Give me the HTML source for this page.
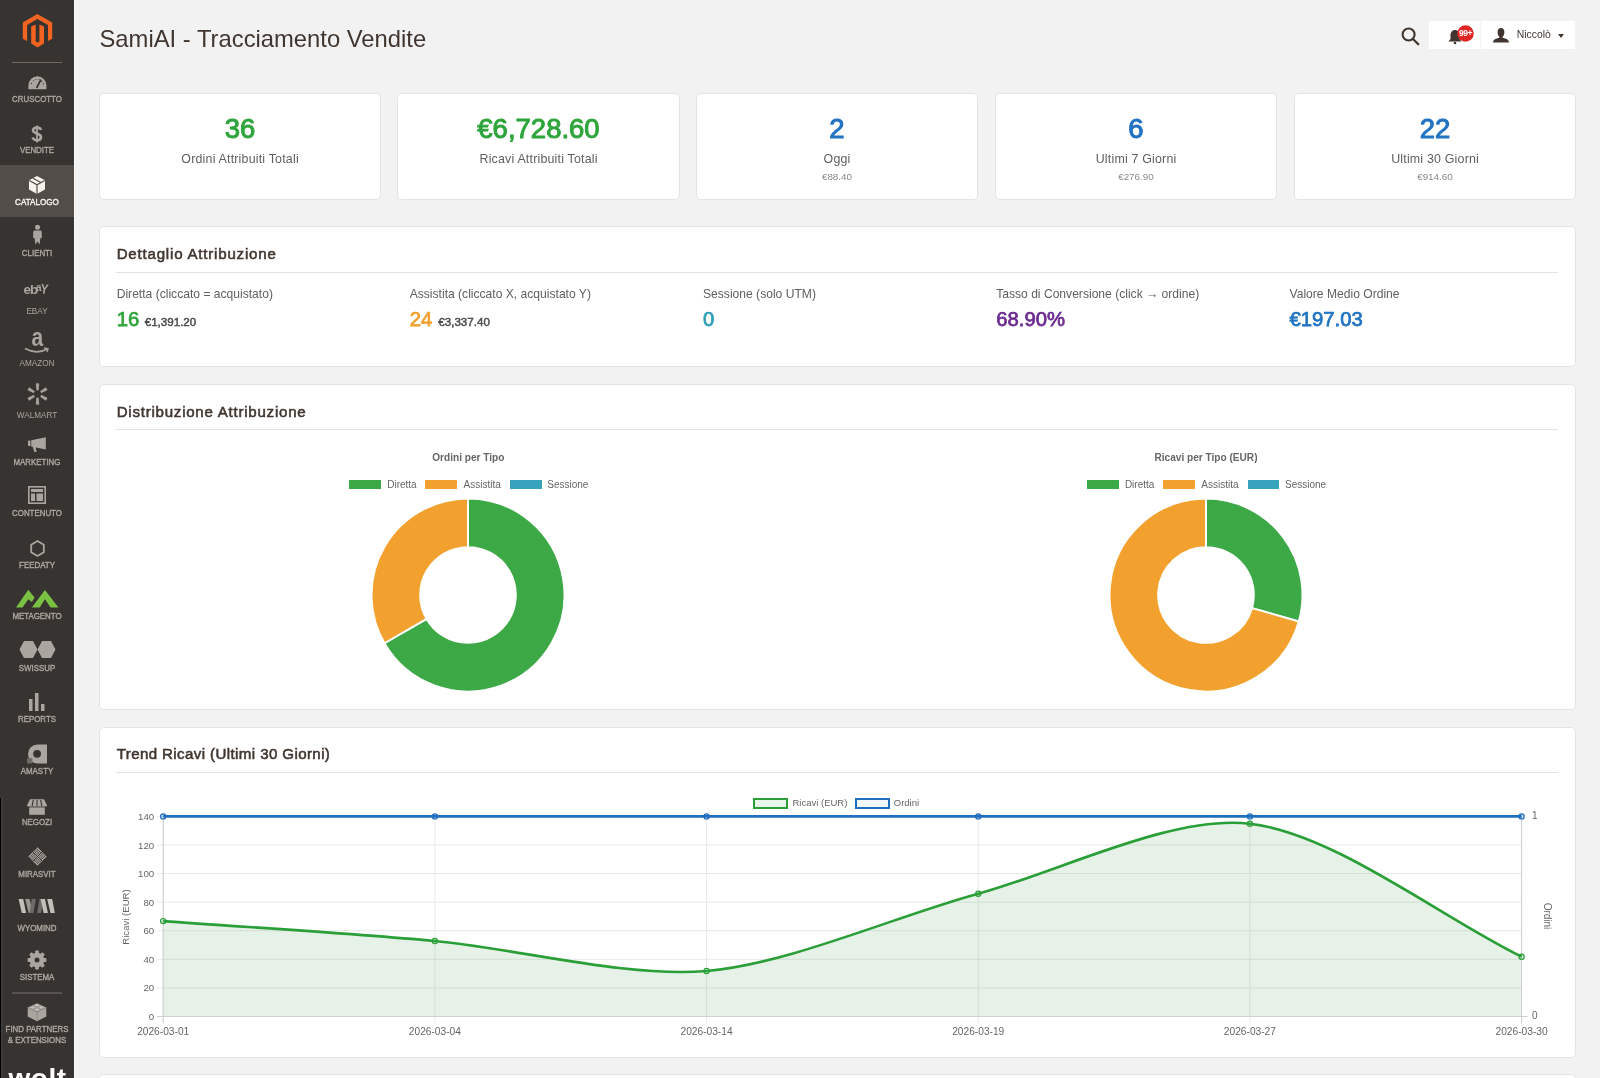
<!DOCTYPE html>
<html><head><meta charset="utf-8"><title>SamiAI - Tracciamento Vendite</title>
<style>
html,body{margin:0;padding:0;}
body{width:1600px;height:1078px;position:relative;overflow:hidden;background:#f2f2f2;font-family:"Liberation Sans", sans-serif;}
.t{position:absolute;line-height:1;white-space:nowrap;font-family:"Liberation Sans", sans-serif;}
svg{overflow:visible;}
</style></head><body><div id="root" style="position:absolute;left:0;top:0;width:1600px;height:1078px;will-change:transform;">
<div style="position:absolute;left:0px;top:0px;width:74px;height:1078px;background:#373330;"></div>
<div style="position:absolute;left:74px;top:0px;width:1px;height:1078px;background:#fbfbfb;"></div>
<div style="position:absolute;left:0px;top:165px;width:74px;height:52px;background:#524d49;"></div>
<div style="position:absolute;left:0px;top:797.5px;width:1px;height:280.5px;background:#000;"></div>
<div style="position:absolute;left:1px;top:797.5px;width:2px;height:280.5px;background:#3d3b39;"></div>
<svg style="position:absolute;left:22px;top:13px" width="31" height="36" viewBox="0 0 31 36">
<path fill="#f26322" d="M15.3 0.9 L30.2 9.5 V25.8 L26 28 V12 L15.3 5.9 L5.1 12 V28 L0.8 25.8 V9.5 Z"/>
<path fill="#f26322" d="M9.2 13.4 L13.7 11.6 V28.5 L15.5 29.6 L17.4 28.5 V11.6 L22 13.4 V30.6 L15.5 34.4 L9.2 30.6 Z"/>
</svg>
<div style="position:absolute;left:12px;top:62px;width:50px;height:1px;background:#736963;"></div>
<div class="t" style="left:0.00px;width:74px;text-align:center;top:95.65px;font-size:7.9px;color:#aba59e;font-weight:normal;transform:scaleY(1.17);transform-origin:50% 84.65%;-webkit-text-stroke:0.35px #aba59e;">CRUSCOTTO</div>
<div class="t" style="left:0.00px;width:74px;text-align:center;top:146.95px;font-size:7.9px;color:#aba59e;font-weight:normal;transform:scaleY(1.17);transform-origin:50% 84.65%;-webkit-text-stroke:0.35px #aba59e;">VENDITE</div>
<div class="t" style="left:0.00px;width:74px;text-align:center;top:198.95px;font-size:8.1px;color:#f7f3eb;font-weight:normal;transform:scaleY(1.17);transform-origin:50% 84.65%;-webkit-text-stroke:0.35px #f7f3eb;">CATALOGO</div>
<div class="t" style="left:0.00px;width:74px;text-align:center;top:250.35px;font-size:7.9px;color:#aba59e;font-weight:normal;transform:scaleY(1.17);transform-origin:50% 84.65%;-webkit-text-stroke:0.35px #aba59e;">CLIENTI</div>
<div class="t" style="left:0.00px;width:74px;text-align:center;top:307.80px;font-size:8.2px;color:#aba59e;font-weight:normal;transform:scaleY(1.17);transform-origin:50% 84.65%;">EBAY</div>
<div class="t" style="left:0.00px;width:74px;text-align:center;top:360.20px;font-size:8.2px;color:#aba59e;font-weight:normal;transform:scaleY(1.17);transform-origin:50% 84.65%;">AMAZON</div>
<div class="t" style="left:0.00px;width:74px;text-align:center;top:411.70px;font-size:8.2px;color:#aba59e;font-weight:normal;transform:scaleY(1.17);transform-origin:50% 84.65%;">WALMART</div>
<div class="t" style="left:0.00px;width:74px;text-align:center;top:458.55px;font-size:7.9px;color:#aba59e;font-weight:normal;transform:scaleY(1.17);transform-origin:50% 84.65%;-webkit-text-stroke:0.35px #aba59e;">MARKETING</div>
<div class="t" style="left:0.00px;width:74px;text-align:center;top:510.15px;font-size:7.9px;color:#aba59e;font-weight:normal;transform:scaleY(1.17);transform-origin:50% 84.65%;-webkit-text-stroke:0.35px #aba59e;">CONTENUTO</div>
<div class="t" style="left:0.00px;width:74px;text-align:center;top:561.75px;font-size:7.9px;color:#aba59e;font-weight:normal;transform:scaleY(1.17);transform-origin:50% 84.65%;-webkit-text-stroke:0.35px #aba59e;">FEEDATY</div>
<div class="t" style="left:0.00px;width:74px;text-align:center;top:613.15px;font-size:7.9px;color:#aba59e;font-weight:normal;transform:scaleY(1.17);transform-origin:50% 84.65%;-webkit-text-stroke:0.35px #aba59e;">METAGENTO</div>
<div class="t" style="left:0.00px;width:74px;text-align:center;top:664.55px;font-size:7.9px;color:#aba59e;font-weight:normal;transform:scaleY(1.17);transform-origin:50% 84.65%;-webkit-text-stroke:0.35px #aba59e;">SWISSUP</div>
<div class="t" style="left:0.00px;width:74px;text-align:center;top:716.35px;font-size:7.9px;color:#aba59e;font-weight:normal;transform:scaleY(1.17);transform-origin:50% 84.65%;-webkit-text-stroke:0.35px #aba59e;">REPORTS</div>
<div class="t" style="left:0.00px;width:74px;text-align:center;top:767.75px;font-size:7.9px;color:#aba59e;font-weight:normal;transform:scaleY(1.17);transform-origin:50% 84.65%;-webkit-text-stroke:0.35px #aba59e;">AMASTY</div>
<div class="t" style="left:0.00px;width:74px;text-align:center;top:818.85px;font-size:7.9px;color:#aba59e;font-weight:normal;transform:scaleY(1.17);transform-origin:50% 84.65%;-webkit-text-stroke:0.35px #aba59e;">NEGOZI</div>
<div class="t" style="left:0.00px;width:74px;text-align:center;top:870.95px;font-size:7.9px;color:#aba59e;font-weight:normal;transform:scaleY(1.17);transform-origin:50% 84.65%;-webkit-text-stroke:0.35px #aba59e;">MIRASVIT</div>
<div class="t" style="left:0.00px;width:74px;text-align:center;top:925.15px;font-size:7.9px;color:#aba59e;font-weight:normal;transform:scaleY(1.17);transform-origin:50% 84.65%;-webkit-text-stroke:0.35px #aba59e;">WYOMIND</div>
<div class="t" style="left:0.00px;width:74px;text-align:center;top:974.35px;font-size:7.9px;color:#aba59e;font-weight:normal;transform:scaleY(1.17);transform-origin:50% 84.65%;-webkit-text-stroke:0.35px #aba59e;">SISTEMA</div>
<div class="t" style="left:0.00px;width:74px;text-align:center;top:1025.95px;font-size:7.9px;color:#aba59e;font-weight:normal;transform:scaleY(1.17);transform-origin:50% 84.65%;-webkit-text-stroke:0.35px #aba59e;">FIND PARTNERS</div>
<div class="t" style="left:0.00px;width:74px;text-align:center;top:1036.65px;font-size:7.9px;color:#aba59e;font-weight:normal;transform:scaleY(1.17);transform-origin:50% 84.65%;-webkit-text-stroke:0.35px #aba59e;">&amp; EXTENSIONS</div>
<div style="position:absolute;left:12px;top:992px;width:50px;height:2px;background:#575250;"></div>
<svg style="position:absolute;left:27.5px;top:76px" width="19" height="14" viewBox="0 0 19 14"><path fill="#aaa59f" d="M0.4 9.3 A9 9 0 0 1 18.4 9.3 V13.3 H0.4 Z"/><path stroke="#373330" stroke-width="1.8" stroke-linecap="round" d="M8.9 11.3 L12.7 4.2"/><circle cx="3.48" cy="7.45" r="0.6" fill="#373330"/><circle cx="5.35" cy="4.77" r="0.6" fill="#373330"/><circle cx="7.77" cy="3.51" r="0.6" fill="#373330"/><circle cx="11.03" cy="3.51" r="0.6" fill="#373330"/><circle cx="13.85" cy="5.15" r="0.6" fill="#373330"/><circle cx="15.39" cy="7.65" r="0.6" fill="#373330"/></svg>
<svg style="position:absolute;left:30.5px;top:124.5px" width="12" height="18" viewBox="0 0 12 18"><path fill="none" stroke="#aaa59f" stroke-width="2.6" d="M10 5 C9.5 3.3 8 2.6 6 2.6 C3.5 2.6 2 3.8 2 5.5 C2 9 10 8 10 12 C10 14 8.3 15.2 6 15.2 C3.6 15.2 2.2 14.2 1.6 12.4"/><path stroke="#aaa59f" stroke-width="1.8" d="M6 0.5 V17.5"/></svg>
<svg style="position:absolute;left:29px;top:175.5px" width="16" height="18" viewBox="0 0 16 18"><path fill="#f7f3eb" d="M8 0 L16 4.3 V13.5 L8 18 L0 13.5 V4.3 Z"/><path stroke="#524d49" stroke-width="1.2" fill="none" d="M0.3 4.5 L8 8.8 L15.7 4.5 M8 8.8 V18 M4 2.2 L11.8 6.6"/></svg>
<svg style="position:absolute;left:32px;top:223.5px" width="11" height="21" viewBox="0 0 11 21"><circle cx="5.5" cy="3.2" r="2.5" fill="#aaa59f"/><path fill="#aaa59f" d="M2.2 6.6 H8.8 Q9.6 6.8 9.7 8 L9.9 13.8 L8.4 14.3 L7.6 20.5 L5.5 17.6 L3.4 20.5 L2.6 14.3 L1.1 13.8 L1.3 8 Q1.4 6.8 2.2 6.6 Z"/></svg>
<div class="t" style="left:23.60px;top:282.55px;font-size:13.5px;color:#aaa59f;font-weight:bold;">e</div>
<div class="t" style="left:30.00px;top:282.95px;font-size:13.5px;color:#aaa59f;font-weight:bold;">b</div>
<div class="t" style="left:35.80px;top:282.35px;font-size:10.5px;color:#aaa59f;font-weight:bold;">a</div>
<div class="t" style="left:40.20px;top:281.55px;font-size:13.5px;color:#aaa59f;font-weight:bold;transform:rotate(8deg) scaleX(0.85);transform-origin:0 80%;">Y</div>
<div class="t" style="left:17.30px;width:40px;text-align:center;top:327.80px;font-size:21px;color:#aaa59f;font-weight:bold;transform:scaleY(1.2);transform-origin:50% 84.65%;">a</div>
<svg style="position:absolute;left:24px;top:347px" width="26" height="8" viewBox="0 0 26 8"><path fill="none" stroke="#aaa59f" stroke-width="1.6" d="M1 1.5 Q13 8 23 2"/><path fill="none" stroke="#aaa59f" stroke-width="1.4" d="M20 1 L24 1.8 L23 5"/></svg>
<svg style="position:absolute;left:26.7px;top:383.2px" width="21" height="22" viewBox="0 0 21 22"><path fill="#aaa59f" stroke="#aaa59f" stroke-width="0.7" stroke-linejoin="round" d="M11.25 7.00 L11.80 0.70 L9.20 0.70 L9.75 7.00 Z"/><path fill="#aaa59f" stroke="#aaa59f" stroke-width="0.7" stroke-linejoin="round" d="M14.34 9.65 L20.07 6.98 L18.77 4.72 L13.59 8.35 Z"/><path fill="#aaa59f" stroke="#aaa59f" stroke-width="0.7" stroke-linejoin="round" d="M13.59 13.65 L18.77 17.28 L20.07 15.02 L14.34 12.35 Z"/><path fill="#aaa59f" stroke="#aaa59f" stroke-width="0.7" stroke-linejoin="round" d="M9.75 15.00 L9.20 21.30 L11.80 21.30 L11.25 15.00 Z"/><path fill="#aaa59f" stroke="#aaa59f" stroke-width="0.7" stroke-linejoin="round" d="M6.66 12.35 L0.93 15.02 L2.23 17.28 L7.41 13.65 Z"/><path fill="#aaa59f" stroke="#aaa59f" stroke-width="0.7" stroke-linejoin="round" d="M7.41 8.35 L2.23 4.72 L0.93 6.98 L6.66 9.65 Z"/></svg>
<svg style="position:absolute;left:28.2px;top:437.3px" width="18" height="16" viewBox="0 0 18 16"><rect x="0" y="3.6" width="2.4" height="5.4" fill="#aaa59f"/><path fill="#aaa59f" d="M3.2 3.2 L17.8 0.3 V12.5 L3.2 9.4 Z M4.6 9.6 L7.7 10.2 L8.6 15 L6.4 15 Z"/></svg>
<svg style="position:absolute;left:27.9px;top:486px" width="18" height="18" viewBox="0 0 18 18"><rect x="0.8" y="0.8" width="16.4" height="16.4" fill="none" stroke="#aaa59f" stroke-width="1.6"/><rect x="3" y="3" width="12" height="3" fill="#aaa59f"/><rect x="3" y="7.5" width="4" height="7.5" fill="#aaa59f"/><rect x="8.5" y="7.5" width="6.5" height="7.5" fill="#aaa59f"/></svg>
<svg style="position:absolute;left:30px;top:540px" width="15" height="17" viewBox="0 0 15 17"><path fill="none" stroke="#aaa59f" stroke-width="1.8" d="M7.5 1 L13.8 4.7 V12.3 L7.5 16 L1.2 12.3 V4.7 Z"/></svg>
<svg style="position:absolute;left:15px;top:580px" width="45" height="30" viewBox="0 0 45 30"><path fill="#7ac143" d="M1 27.6 L13.3 9.7 L19.6 17.6 L16.9 22 L13.3 19.2 L7.5 27.6 Z"/><path fill="#7ac143" d="M16.9 27.6 L29.9 10 L43.5 27.6 L35.7 27.6 L29.9 19.2 L24.7 27.6 Z"/></svg>
<svg style="position:absolute;left:18.5px;top:641px" width="38" height="17" viewBox="0 0 38 17"><path fill="#aaa59f" d="M5 0 H14 L18.5 8.5 L14 17 H5 L0.5 8.5 Z M23 0 H32 L36.5 8.5 L32 17 H23 L18.5 8.5 Z"/></svg>
<svg style="position:absolute;left:28.5px;top:693px" width="17" height="18" viewBox="0 0 17 18"><rect x="0" y="6" width="3.5" height="12" fill="#aaa59f"/><rect x="6" y="0" width="3.5" height="18" fill="#aaa59f"/><rect x="12" y="11" width="3.5" height="7" fill="#aaa59f"/></svg>
<svg style="position:absolute;left:27px;top:743.5px" width="21" height="20" viewBox="0 0 21 20"><path fill="#aaa59f" d="M10.5 0.5 H20 V19.5 H10.5 A9.5 9.5 0 0 1 10.5 0.5 Z"/><circle cx="10.1" cy="9.8" r="3.9" fill="#373330"/><rect x="0" y="14.2" width="5.3" height="5.3" fill="#6e6a66"/></svg>
<svg style="position:absolute;left:27px;top:798.5px" width="20" height="16" viewBox="0 0 20 16"><path fill="#aaa59f" d="M3 0.3 H17 L20 6.3 Q20 7.6 18.8 7.6 H1.2 Q0 7.6 0 6.3 Z"/><rect x="2.2" y="8.4" width="15.6" height="7.4" fill="#aaa59f"/><path stroke="#373330" stroke-width="1.1" d="M6.3 1 L5.2 6.8 M10 1 V6.8 M13.7 1 L14.8 6.8"/></svg>
<svg style="position:absolute;left:27.5px;top:847.3px" width="19" height="19" viewBox="0 0 19 19"><g transform="rotate(45 9.5 9.5)"><rect x="3" y="3" width="13" height="13" fill="#aaa59f"/><path stroke="#373330" stroke-width="0.75" d="M3 4.62 H9.5 M11.12 3 V9.5 M4.62 9.5 V16 M9.5 11.12 H16"/><path stroke="#373330" stroke-width="0.75" d="M3 6.25 H9.5 M12.75 3 V9.5 M6.25 9.5 V16 M9.5 12.75 H16"/><path stroke="#373330" stroke-width="0.75" d="M3 7.88 H9.5 M14.38 3 V9.5 M7.88 9.5 V16 M9.5 14.38 H16"/><path stroke="#373330" stroke-width="0.9" d="M9.5 3 V16 M3 9.5 H16"/></g></svg>
<svg style="position:absolute;left:14px;top:893px" width="46" height="26" viewBox="0 0 46 26"><path fill="#c2beb9" d="M4.60 6.00 L9.20 6.00 L12.10 20.10 L7.80 20.10 Z"/><path fill="#9b9793" d="M11.20 6.00 L15.50 6.00 L19.00 20.10 L14.70 20.10 Z"/><path fill="#6d6a67" d="M17.80 6.00 L21.90 6.00 L19.40 20.10 L15.40 20.10 Z"/><path fill="#6d6a67" d="M25.60 6.00 L30.00 6.00 L27.00 20.10 L23.10 20.10 Z"/><path fill="#c2beb9" d="M26.60 6.00 L31.00 6.00 L33.90 20.10 L29.60 20.10 Z"/><path fill="#c2beb9" d="M33.20 6.00 L38.20 6.00 L40.80 20.10 L36.50 20.10 Z"/></svg>
<svg style="position:absolute;left:27px;top:950.2px" width="20" height="20" viewBox="0 0 20 20"><circle cx="10" cy="10" r="7.3" fill="#aaa59f"/><rect x="8.1" y="0.6" width="3.8" height="5" rx="0.9" fill="#aaa59f" transform="rotate(0 10 10)"/><rect x="8.1" y="0.6" width="3.8" height="5" rx="0.9" fill="#aaa59f" transform="rotate(45 10 10)"/><rect x="8.1" y="0.6" width="3.8" height="5" rx="0.9" fill="#aaa59f" transform="rotate(90 10 10)"/><rect x="8.1" y="0.6" width="3.8" height="5" rx="0.9" fill="#aaa59f" transform="rotate(135 10 10)"/><rect x="8.1" y="0.6" width="3.8" height="5" rx="0.9" fill="#aaa59f" transform="rotate(180 10 10)"/><rect x="8.1" y="0.6" width="3.8" height="5" rx="0.9" fill="#aaa59f" transform="rotate(225 10 10)"/><rect x="8.1" y="0.6" width="3.8" height="5" rx="0.9" fill="#aaa59f" transform="rotate(270 10 10)"/><rect x="8.1" y="0.6" width="3.8" height="5" rx="0.9" fill="#aaa59f" transform="rotate(315 10 10)"/><circle cx="10" cy="10" r="2.5" fill="#373330"/></svg>
<svg style="position:absolute;left:27px;top:1002.3px" width="20" height="20" viewBox="0 0 20 20"><path fill="#aaa59f" d="M10 1.2 L19.3 5.6 V14.6 L10 19.2 L0.7 14.6 V5.6 Z"/><path stroke="#8a8682" stroke-width="0.8" fill="none" d="M0.7 5.6 L10 10.2 L19.3 5.6 M10 10.2 V19.2"/><ellipse cx="10" cy="4.1" rx="2.3" ry="1.2" fill="#7f7b77"/><ellipse cx="10" cy="3.6" rx="2.1" ry="1.05" fill="#c9c5c0"/><ellipse cx="5.6" cy="6.3" rx="2.3" ry="1.2" fill="#7f7b77"/><ellipse cx="5.6" cy="5.8" rx="2.1" ry="1.05" fill="#c9c5c0"/><ellipse cx="14.4" cy="6.3" rx="2.3" ry="1.2" fill="#7f7b77"/><ellipse cx="14.4" cy="5.8" rx="2.1" ry="1.05" fill="#c9c5c0"/><ellipse cx="10" cy="8.5" rx="2.3" ry="1.2" fill="#7f7b77"/><ellipse cx="10" cy="8" rx="2.1" ry="1.05" fill="#c9c5c0"/></svg>
<div class="t" style="left:0.50px;width:74px;text-align:center;top:1064.80px;font-size:28px;color:#ffffff;font-weight:bold;letter-spacing:0.5px;">wolt</div>
<div class="t" style="left:99.50px;top:27.40px;font-size:23.8px;color:#41362f;font-weight:normal;">SamiAI - Tracciamento Vendite</div>
<svg style="position:absolute;left:1400px;top:25.6px" width="21" height="21" viewBox="0 0 21 21"><circle cx="8.6" cy="8.5" r="6" fill="none" stroke="#41362f" stroke-width="2.1"/><path stroke="#41362f" stroke-width="2.3" stroke-linecap="round" d="M13 13 L18.3 18.3"/></svg>
<div style="position:absolute;left:1429px;top:21px;width:51px;height:28px;background:#fff;"></div>
<div style="position:absolute;left:1481px;top:21px;width:94px;height:28px;background:#fff;"></div>
<svg style="position:absolute;left:1447px;top:29px" width="16" height="16" viewBox="0 0 16 16"><path fill="#41362f" d="M8 1 C4.8 1 3.5 3.5 3.5 6.5 V10 L1.5 12.5 H14.5 L12.5 10 V6.5 C12.5 3.5 11.2 1 8 1 Z"/><circle cx="8" cy="14" r="1.3" fill="#41362f"/></svg>
<svg style="position:absolute;left:1457px;top:25px" width="17" height="17" viewBox="0 0 17 17"><circle cx="8.5" cy="8.5" r="8.3" fill="#e22626"/></svg>
<div class="t" style="left:1450.50px;width:30px;text-align:center;top:29.35px;font-size:8.5px;color:#fff;font-weight:bold;letter-spacing:-0.4px;">99+</div>
<svg style="position:absolute;left:1492.5px;top:27.5px" width="16" height="14.5" viewBox="0 0 16 14.5"><path fill="#41362f" d="M8 0 C5.5 0 4.6 2 4.6 4.2 C4.6 6.5 5.6 8.3 6.4 8.8 V9.8 C3 10.6 0.3 11.5 0 14.5 H16 C15.7 11.5 13 10.6 9.6 9.8 V8.8 C10.4 8.3 11.4 6.5 11.4 4.2 C11.4 2 10.5 0 8 0 Z"/></svg>
<div class="t" style="left:1516.80px;top:30.00px;font-size:10.4px;color:#41362f;font-weight:normal;">Niccol&ograve;</div>
<svg style="position:absolute;left:1557.5px;top:34px" width="6" height="4" viewBox="0 0 6 4"><path fill="#41362f" d="M0 0 H6 L3 4 Z"/></svg>
<div style="position:absolute;left:99px;top:93px;width:282px;height:107px;background:#fff;border:1px solid #e4e4e4;border-radius:5px;box-sizing:border-box;"></div>
<div class="t" style="left:100.00px;width:280px;text-align:center;top:114.55px;font-size:27.5px;color:#2fa53c;font-weight:normal;-webkit-text-stroke:1.0px #2fa53c;">36</div>
<div class="t" style="left:100.00px;width:280px;text-align:center;top:153.40px;font-size:12.4px;color:#5f5f5f;font-weight:normal;letter-spacing:0.2px;text-indent:0.2px;">Ordini Attribuiti Totali</div>
<div style="position:absolute;left:397px;top:93px;width:283px;height:107px;background:#fff;border:1px solid #e4e4e4;border-radius:5px;box-sizing:border-box;"></div>
<div class="t" style="left:398.50px;width:280px;text-align:center;top:114.55px;font-size:27.5px;color:#2fa53c;font-weight:normal;-webkit-text-stroke:1.0px #2fa53c;">&euro;6,728.60</div>
<div class="t" style="left:398.50px;width:280px;text-align:center;top:153.40px;font-size:12.4px;color:#5f5f5f;font-weight:normal;letter-spacing:0.2px;text-indent:0.2px;">Ricavi Attribuiti Totali</div>
<div style="position:absolute;left:696px;top:93px;width:282px;height:107px;background:#fff;border:1px solid #e4e4e4;border-radius:5px;box-sizing:border-box;"></div>
<div class="t" style="left:697.00px;width:280px;text-align:center;top:114.55px;font-size:27.5px;color:#2273c3;font-weight:normal;-webkit-text-stroke:1.0px #2273c3;">2</div>
<div class="t" style="left:697.00px;width:280px;text-align:center;top:153.40px;font-size:12.4px;color:#5f5f5f;font-weight:normal;letter-spacing:0.2px;text-indent:0.2px;">Oggi</div>
<div class="t" style="left:697.00px;width:280px;text-align:center;top:171.85px;font-size:9.9px;color:#8a8a8a;font-weight:normal;">&euro;88.40</div>
<div style="position:absolute;left:995px;top:93px;width:282px;height:107px;background:#fff;border:1px solid #e4e4e4;border-radius:5px;box-sizing:border-box;"></div>
<div class="t" style="left:996.00px;width:280px;text-align:center;top:114.55px;font-size:27.5px;color:#2273c3;font-weight:normal;-webkit-text-stroke:1.0px #2273c3;">6</div>
<div class="t" style="left:996.00px;width:280px;text-align:center;top:153.40px;font-size:12.4px;color:#5f5f5f;font-weight:normal;letter-spacing:0.2px;text-indent:0.2px;">Ultimi 7 Giorni</div>
<div class="t" style="left:996.00px;width:280px;text-align:center;top:171.85px;font-size:9.9px;color:#8a8a8a;font-weight:normal;">&euro;276.90</div>
<div style="position:absolute;left:1294px;top:93px;width:282px;height:107px;background:#fff;border:1px solid #e4e4e4;border-radius:5px;box-sizing:border-box;"></div>
<div class="t" style="left:1295.00px;width:280px;text-align:center;top:114.55px;font-size:27.5px;color:#2273c3;font-weight:normal;-webkit-text-stroke:1.0px #2273c3;">22</div>
<div class="t" style="left:1295.00px;width:280px;text-align:center;top:153.40px;font-size:12.4px;color:#5f5f5f;font-weight:normal;letter-spacing:0.2px;text-indent:0.2px;">Ultimi 30 Giorni</div>
<div class="t" style="left:1295.00px;width:280px;text-align:center;top:171.85px;font-size:9.9px;color:#8a8a8a;font-weight:normal;">&euro;914.60</div>
<div style="position:absolute;left:99px;top:226px;width:1477px;height:140.5px;background:#fff;border:1px solid #e4e4e4;border-radius:5px;box-sizing:border-box;"></div>
<div class="t" style="left:116.70px;top:245.55px;font-size:15.1px;color:#41362f;font-weight:normal;-webkit-text-stroke:0.55px #41362f;letter-spacing:0.786px;">Dettaglio Attribuzione</div>
<div style="position:absolute;left:116px;top:272px;width:1442px;height:1px;background:#e3e3e3;"></div>
<div class="t" style="left:116.70px;top:287.85px;font-size:12.1px;color:#5f5f5f;font-weight:normal;">Diretta (cliccato = acquistato)</div>
<div class="t" style="left:116.70px;top:308.85px;font-size:20.3px;color:#2fa53c;font-weight:normal;-webkit-text-stroke:0.75px #2fa53c;">16</div>
<div class="t" style="left:144.70px;top:316.20px;font-size:11.6px;color:#4a4a4a;font-weight:normal;-webkit-text-stroke:0.45px #4a4a4a;">&euro;1,391.20</div>
<div class="t" style="left:409.70px;top:287.85px;font-size:12.1px;color:#5f5f5f;font-weight:normal;">Assistita (cliccato X, acquistato Y)</div>
<div class="t" style="left:409.70px;top:308.85px;font-size:20.3px;color:#f0a02e;font-weight:normal;-webkit-text-stroke:0.75px #f0a02e;">24</div>
<div class="t" style="left:438.30px;top:316.20px;font-size:11.6px;color:#4a4a4a;font-weight:normal;-webkit-text-stroke:0.45px #4a4a4a;">&euro;3,337.40</div>
<div class="t" style="left:703.00px;top:287.85px;font-size:12.1px;color:#5f5f5f;font-weight:normal;">Sessione (solo UTM)</div>
<div class="t" style="left:703.00px;top:308.85px;font-size:20.3px;color:#30a0b8;font-weight:normal;-webkit-text-stroke:0.75px #30a0b8;">0</div>
<div class="t" style="left:996.20px;top:287.85px;font-size:12.1px;color:#5f5f5f;font-weight:normal;">Tasso di Conversione (click &rarr; ordine)</div>
<div class="t" style="left:996.20px;top:308.85px;font-size:20.3px;color:#6c2d91;font-weight:normal;-webkit-text-stroke:0.75px #6c2d91;">68.90%</div>
<div class="t" style="left:1289.50px;top:287.85px;font-size:12.1px;color:#5f5f5f;font-weight:normal;">Valore Medio Ordine</div>
<div class="t" style="left:1289.50px;top:308.85px;font-size:20.3px;color:#2273c3;font-weight:normal;-webkit-text-stroke:0.75px #2273c3;">&euro;197.03</div>
<div style="position:absolute;left:99px;top:383.5px;width:1477px;height:326.0px;background:#fff;border:1px solid #e4e4e4;border-radius:5px;box-sizing:border-box;"></div>
<div class="t" style="left:116.70px;top:403.65px;font-size:15.1px;color:#41362f;font-weight:normal;-webkit-text-stroke:0.55px #41362f;letter-spacing:0.748px;">Distribuzione Attribuzione</div>
<div style="position:absolute;left:116px;top:429px;width:1442px;height:1px;background:#e3e3e3;"></div>
<div class="t" style="left:318.30px;width:300px;text-align:center;top:452.65px;font-size:10.1px;color:#666666;font-weight:bold;">Ordini per Tipo</div>
<div style="position:absolute;left:349.4px;top:480.4px;width:31.600000000000023px;height:8.200000000000045px;background:#3ca846;"></div>
<div class="t" style="left:387.20px;top:479.80px;font-size:10.0px;color:#666666;font-weight:normal;">Diretta</div>
<div style="position:absolute;left:425.4px;top:480.4px;width:31.600000000000023px;height:8.200000000000045px;background:#f2a12f;"></div>
<div class="t" style="left:463.60px;top:479.80px;font-size:10.0px;color:#666666;font-weight:normal;">Assistita</div>
<div style="position:absolute;left:510.0px;top:480.4px;width:31.600000000000023px;height:8.200000000000045px;background:#38a3bd;"></div>
<div class="t" style="left:547.30px;top:479.80px;font-size:10.0px;color:#666666;font-weight:normal;">Sessione</div>
<svg style="position:absolute;left:368.3px;top:494.7px" width="200" height="200" viewBox="0 0 200 200"><path fill="#3ca846" stroke="#fff" stroke-width="2" stroke-linejoin="bevel" d="M100.00 3.50 A96.5 96.5 0 1 1 16.43 148.25 L58.60 123.90 A47.8 47.8 0 1 0 100.00 52.20 Z"/><path fill="#f2a12f" stroke="#fff" stroke-width="2" stroke-linejoin="bevel" d="M16.43 148.25 A96.5 96.5 0 0 1 100.00 3.50 L100.00 52.20 A47.8 47.8 0 0 0 58.60 123.90 Z"/></svg>
<div class="t" style="left:1056.00px;width:300px;text-align:center;top:452.65px;font-size:10.1px;color:#666666;font-weight:bold;">Ricavi per Tipo (EUR)</div>
<div style="position:absolute;left:1087.1px;top:480.4px;width:31.600000000000136px;height:8.200000000000045px;background:#3ca846;"></div>
<div class="t" style="left:1124.90px;top:479.80px;font-size:10.0px;color:#666666;font-weight:normal;">Diretta</div>
<div style="position:absolute;left:1163.1px;top:480.4px;width:31.600000000000136px;height:8.200000000000045px;background:#f2a12f;"></div>
<div class="t" style="left:1201.30px;top:479.80px;font-size:10.0px;color:#666666;font-weight:normal;">Assistita</div>
<div style="position:absolute;left:1247.7px;top:480.4px;width:31.59999999999991px;height:8.200000000000045px;background:#38a3bd;"></div>
<div class="t" style="left:1285.00px;top:479.80px;font-size:10.0px;color:#666666;font-weight:normal;">Sessione</div>
<svg style="position:absolute;left:1106px;top:494.7px" width="200" height="200" viewBox="0 0 200 200"><path fill="#3ca846" stroke="#fff" stroke-width="2" stroke-linejoin="bevel" d="M100.00 3.50 A96.5 96.5 0 0 1 192.80 126.46 L145.97 113.11 A47.8 47.8 0 0 0 100.00 52.20 Z"/><path fill="#f2a12f" stroke="#fff" stroke-width="2" stroke-linejoin="bevel" d="M192.80 126.46 A96.5 96.5 0 1 1 100.00 3.50 L100.00 52.20 A47.8 47.8 0 1 0 145.97 113.11 Z"/></svg>
<div style="position:absolute;left:99px;top:726.5px;width:1477px;height:331.5px;background:#fff;border:1px solid #e4e4e4;border-radius:5px;box-sizing:border-box;"></div>
<div class="t" style="left:116.70px;top:745.75px;font-size:15.1px;color:#41362f;font-weight:normal;-webkit-text-stroke:0.55px #41362f;letter-spacing:0.388px;">Trend Ricavi (Ultimi 30 Giorni)</div>
<div style="position:absolute;left:116px;top:772px;width:1442px;height:1px;background:#e3e3e3;"></div>
<svg style="position:absolute;left:0;top:0" width="1600" height="1078"><path stroke="#e8e8e8" stroke-width="1" d="M157.2 1016.50 H1521.6"/><path stroke="#e8e8e8" stroke-width="1" d="M157.2 987.91 H1521.6"/><path stroke="#e8e8e8" stroke-width="1" d="M157.2 959.33 H1521.6"/><path stroke="#e8e8e8" stroke-width="1" d="M157.2 930.74 H1521.6"/><path stroke="#e8e8e8" stroke-width="1" d="M157.2 902.16 H1521.6"/><path stroke="#e8e8e8" stroke-width="1" d="M157.2 873.57 H1521.6"/><path stroke="#e8e8e8" stroke-width="1" d="M157.2 844.99 H1521.6"/><path stroke="#e8e8e8" stroke-width="1" d="M157.2 816.40 H1521.6"/><path stroke="#e8e8e8" stroke-width="1" d="M163.20 816.40 V1023.5"/><path stroke="#e8e8e8" stroke-width="1" d="M434.88 816.40 V1023.5"/><path stroke="#e8e8e8" stroke-width="1" d="M706.56 816.40 V1023.5"/><path stroke="#e8e8e8" stroke-width="1" d="M978.24 816.40 V1023.5"/><path stroke="#e8e8e8" stroke-width="1" d="M1249.92 816.40 V1023.5"/><path stroke="#e8e8e8" stroke-width="1" d="M1521.60 816.40 V1023.5"/><path fill="rgba(60,150,80,0.13)" d="M163.20 921.10 C244.70 927.07 353.51 933.53 434.88 941.00 C516.52 948.50 626.40 977.98 706.56 971.00 C789.40 963.79 896.46 915.87 978.24 893.70 C1059.47 871.68 1171.48 814.61 1249.92 823.70 C1334.49 833.51 1440.10 916.80 1521.60 956.70 L1521.60 1016.5 L163.20 1016.5 Z"/><path stroke="#cfcfcf" stroke-width="1" d="M163.20 816.40 V1023.5 M157.2 1016.50 H1527.6 M1521.60 816.40 V1023.5"/><path fill="none" stroke="#2a9f38" stroke-width="2.6" d="M163.20 921.10 C244.70 927.07 353.51 933.53 434.88 941.00 C516.52 948.50 626.40 977.98 706.56 971.00 C789.40 963.79 896.46 915.87 978.24 893.70 C1059.47 871.68 1171.48 814.61 1249.92 823.70 C1334.49 833.51 1440.10 916.80 1521.60 956.70"/><path fill="none" stroke="#1f6fbf" stroke-width="2.6" d="M163.20 816.40 H1521.60"/><circle cx="163.20" cy="921.10" r="2.6" fill="rgba(40,167,69,0.15)" stroke="#2a9f38" stroke-width="1.2"/><circle cx="434.88" cy="941.00" r="2.6" fill="rgba(40,167,69,0.15)" stroke="#2a9f38" stroke-width="1.2"/><circle cx="706.56" cy="971.00" r="2.6" fill="rgba(40,167,69,0.15)" stroke="#2a9f38" stroke-width="1.2"/><circle cx="978.24" cy="893.70" r="2.6" fill="rgba(40,167,69,0.15)" stroke="#2a9f38" stroke-width="1.2"/><circle cx="1249.92" cy="823.70" r="2.6" fill="rgba(40,167,69,0.15)" stroke="#2a9f38" stroke-width="1.2"/><circle cx="1521.60" cy="956.70" r="2.6" fill="rgba(40,167,69,0.15)" stroke="#2a9f38" stroke-width="1.2"/><circle cx="163.20" cy="816.40" r="2.6" fill="rgba(31,111,191,0.2)" stroke="#1f6fbf" stroke-width="1.2"/><circle cx="434.88" cy="816.40" r="2.6" fill="rgba(31,111,191,0.2)" stroke="#1f6fbf" stroke-width="1.2"/><circle cx="706.56" cy="816.40" r="2.6" fill="rgba(31,111,191,0.2)" stroke="#1f6fbf" stroke-width="1.2"/><circle cx="978.24" cy="816.40" r="2.6" fill="rgba(31,111,191,0.2)" stroke="#1f6fbf" stroke-width="1.2"/><circle cx="1249.92" cy="816.40" r="2.6" fill="rgba(31,111,191,0.2)" stroke="#1f6fbf" stroke-width="1.2"/><circle cx="1521.60" cy="816.40" r="2.6" fill="rgba(31,111,191,0.2)" stroke="#1f6fbf" stroke-width="1.2"/></svg>
<div class="t" style="left:114.20px;width:40px;text-align:right;top:1012.05px;font-size:9.7px;color:#666666;font-weight:normal;">0</div>
<div class="t" style="left:114.20px;width:40px;text-align:right;top:983.46px;font-size:9.7px;color:#666666;font-weight:normal;">20</div>
<div class="t" style="left:114.20px;width:40px;text-align:right;top:954.88px;font-size:9.7px;color:#666666;font-weight:normal;">40</div>
<div class="t" style="left:114.20px;width:40px;text-align:right;top:926.29px;font-size:9.7px;color:#666666;font-weight:normal;">60</div>
<div class="t" style="left:114.20px;width:40px;text-align:right;top:897.71px;font-size:9.7px;color:#666666;font-weight:normal;">80</div>
<div class="t" style="left:114.20px;width:40px;text-align:right;top:869.12px;font-size:9.7px;color:#666666;font-weight:normal;">100</div>
<div class="t" style="left:114.20px;width:40px;text-align:right;top:840.54px;font-size:9.7px;color:#666666;font-weight:normal;">120</div>
<div class="t" style="left:114.20px;width:40px;text-align:right;top:811.95px;font-size:9.7px;color:#666666;font-weight:normal;">140</div>
<div class="t" style="left:123.20px;width:80px;text-align:center;top:1026.60px;font-size:10.2px;color:#666666;font-weight:normal;">2026-03-01</div>
<div class="t" style="left:394.88px;width:80px;text-align:center;top:1026.60px;font-size:10.2px;color:#666666;font-weight:normal;">2026-03-04</div>
<div class="t" style="left:666.56px;width:80px;text-align:center;top:1026.60px;font-size:10.2px;color:#666666;font-weight:normal;">2026-03-14</div>
<div class="t" style="left:938.24px;width:80px;text-align:center;top:1026.60px;font-size:10.2px;color:#666666;font-weight:normal;">2026-03-19</div>
<div class="t" style="left:1209.92px;width:80px;text-align:center;top:1026.60px;font-size:10.2px;color:#666666;font-weight:normal;">2026-03-27</div>
<div class="t" style="left:1481.60px;width:80px;text-align:center;top:1026.60px;font-size:10.2px;color:#666666;font-weight:normal;">2026-03-30</div>
<div class="t" style="left:1532.10px;top:811.40px;font-size:10px;color:#666666;font-weight:normal;">1</div>
<div class="t" style="left:1532.10px;top:1011.40px;font-size:10px;color:#666666;font-weight:normal;">0</div>
<div class="t" style="left:85.7px;top:912px;width:80px;text-align:center;font-size:9.6px;line-height:10px;color:#666666;transform:rotate(-90deg);">Ricavi (EUR)</div>
<div class="t" style="left:1507.4px;top:911px;width:80px;text-align:center;font-size:10px;line-height:10px;color:#666666;transform:rotate(90deg);">Ordini</div>
<div style="position:absolute;left:752.6px;top:797.8px;width:35.0px;height:11.400000000000091px;border:2.4px solid #2a9f38;background:rgba(40,167,69,0.11);box-sizing:border-box;"></div>
<div class="t" style="left:792.50px;top:798.35px;font-size:9.5px;color:#666666;font-weight:normal;">Ricavi (EUR)</div>
<div style="position:absolute;left:854.6px;top:797.8px;width:35.0px;height:11.400000000000091px;border:2.4px solid #1f6fbf;background:rgba(31,111,191,0.06);box-sizing:border-box;"></div>
<div class="t" style="left:893.75px;top:798.35px;font-size:9.5px;color:#666666;font-weight:normal;">Ordini</div>
<div style="position:absolute;left:99px;top:1074px;width:1477px;height:126px;background:#fff;border:1px solid #e4e4e4;border-radius:5px;box-sizing:border-box;"></div>
<div class="t" style="left:116.70px;top:-13.05px;font-size:15.1px;color:#41362f;font-weight:normal;-webkit-text-stroke:0.55px #41362f;"></div>
<div style="position:absolute;left:116px;top:1300px;width:1442px;height:1px;background:#e3e3e3;"></div>
</div></body></html>
